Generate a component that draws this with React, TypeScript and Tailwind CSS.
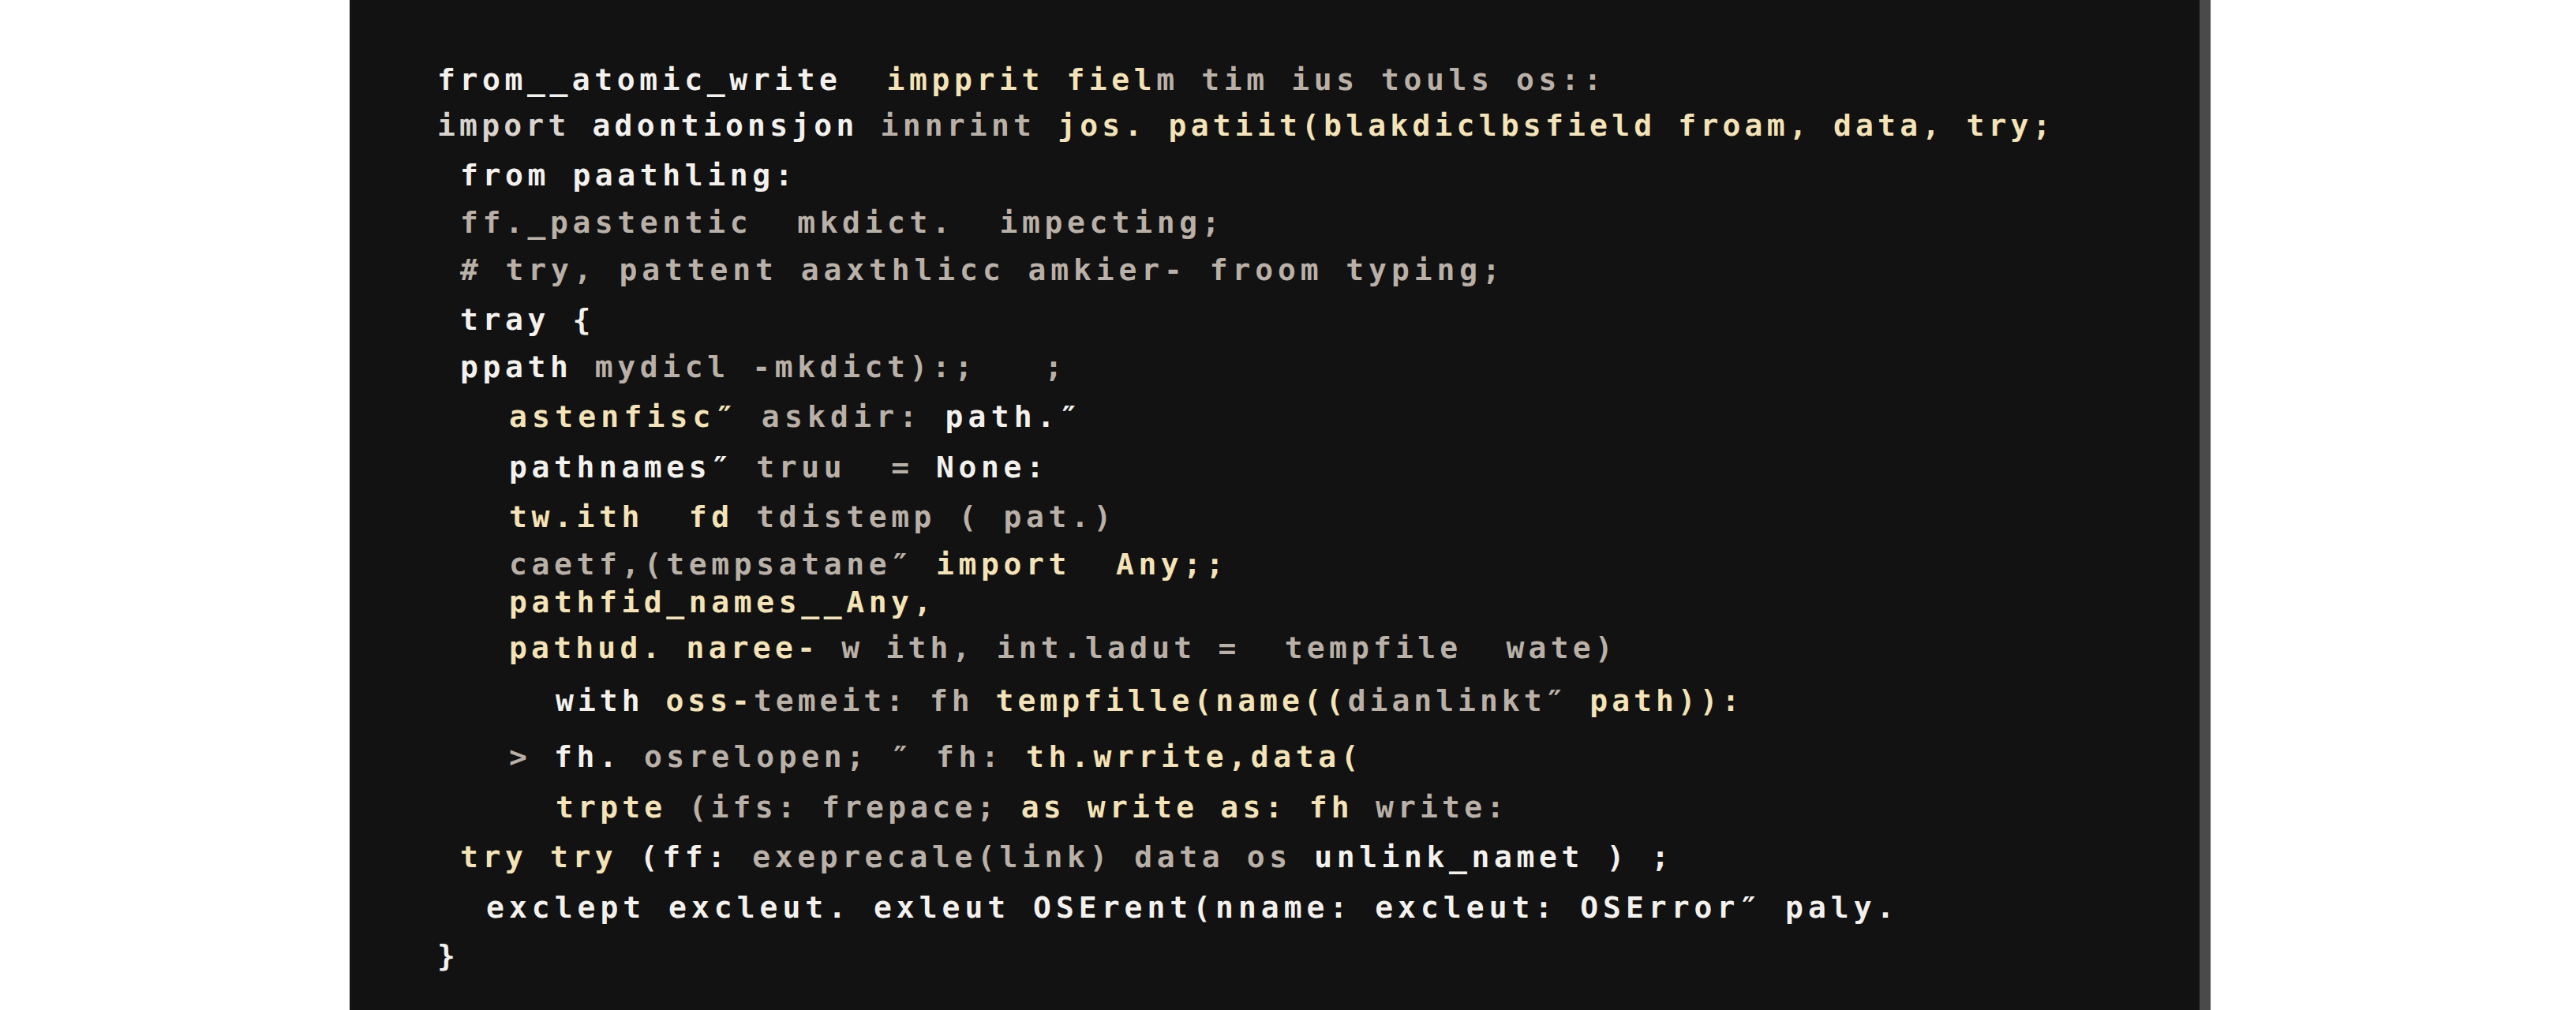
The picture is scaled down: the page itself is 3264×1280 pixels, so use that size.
import React from "react";

type Tone = "w" | "c" | "g" | "l";

const tone: Record<Tone, string> = {
  w: "text-[#f3f1ed] font-bold",
  c: "text-[#f3e3b6] font-bold",
  g: "text-[#b9b0a7] font-bold",
  l: "text-[#d8d3cd] font-bold",
};

type Line = { pl: string; mt: string; tr?: string; parts: [string, Tone][] };

const lines: Line[] = [
  {
    pl: "pl-0",
    mt: "mt-0",
    parts: [
      ["from__atomic_write", "w"],
      ["  impprit fiel", "c"],
      ["m tim ius touls os::", "g"],
    ],
  },
  {
    pl: "pl-0",
    mt: "mt-[10px]",
    tr: "tracking-[5.2px]",
    parts: [
      ["import", "l"],
      [" adontionsjon", "w"],
      [" innrint", "g"],
      [" jos. patiit(blakdiclbsfield froam, data, try;", "c"],
    ],
  },
  { pl: "pl-[29px]", mt: "mt-[15px]", parts: [["from paathling:", "w"]] },
  { pl: "pl-[29px]", mt: "mt-[12px]", parts: [["ff._pastentic  mkdict.  impecting;", "g"]] },
  {
    pl: "pl-[29px]",
    mt: "mt-[12px]",
    tr: "tracking-[5.9px]",
    parts: [["# try, pattent aaxthlicc amkier- froom typing;", "g"]],
  },
  { pl: "pl-[29px]", mt: "mt-[15px]", parts: [["tray {", "w"]] },
  {
    pl: "pl-[29px]",
    mt: "mt-[12px]",
    parts: [
      ["ppath", "w"],
      [" mydicl -mkdict):;   ;", "g"],
    ],
  },
  {
    pl: "pl-[91px]",
    mt: "mt-[15px]",
    tr: "tracking-[6.2px]",
    parts: [
      ["astenfisc\u2033", "c"],
      [" askdir:", "g"],
      [" path.\u2033", "w"],
    ],
  },
  {
    pl: "pl-[91px]",
    mt: "mt-[16px]",
    parts: [
      ["pathnames\u2033", "w"],
      [" truu  =", "g"],
      [" None:", "w"],
    ],
  },
  {
    pl: "pl-[91px]",
    mt: "mt-[15px]",
    parts: [
      ["tw.ith  fd", "c"],
      [" tdistemp ( pat.)", "g"],
    ],
  },
  {
    pl: "pl-[91px]",
    mt: "mt-[12px]",
    parts: [
      ["caetf,(tempsatane\u2033", "g"],
      [" import  Any;;", "c"],
    ],
  },
  { pl: "pl-[91px]", mt: "mt-0", parts: [["pathfid_names__Any,", "c"]] },
  {
    pl: "pl-[91px]",
    mt: "mt-[10px]",
    tr: "tracking-[5.2px]",
    parts: [
      ["pathud. naree-", "c"],
      [" w ith, int.ladut =  tempfile  wate)", "g"],
    ],
  },
  {
    pl: "pl-[150px]",
    mt: "mt-[19px]",
    tr: "tracking-[5px]",
    parts: [
      ["with", "w"],
      [" oss-", "c"],
      ["temeit: fh", "g"],
      [" tempfille(name((", "c"],
      ["dianlinkt\u2033", "g"],
      [" path)):", "c"],
    ],
  },
  {
    pl: "pl-[91px]",
    mt: "mt-[23px]",
    parts: [
      [">", "g"],
      [" fh.", "w"],
      [" osrelopen; \u2033 fh:", "g"],
      [" th.wrrite,data(", "c"],
    ],
  },
  {
    pl: "pl-[150px]",
    mt: "mt-[16px]",
    tr: "tracking-[5.2px]",
    parts: [
      ["trpte", "c"],
      [" (ifs: frepace;", "g"],
      [" as write as: fh", "c"],
      [" write:", "g"],
    ],
  },
  {
    pl: "pl-[29px]",
    mt: "mt-[15px]",
    parts: [
      ["try try", "c"],
      [" (ff:", "w"],
      [" exeprecale(link) data os", "g"],
      [" unlink_namet ) ;", "w"],
    ],
  },
  {
    pl: "pl-[62px]",
    mt: "mt-[16px]",
    tr: "tracking-[6px]",
    parts: [["exclept excleut. exleut OSErent(nname: excleut: OSError\u2033 paly.", "w"]],
  },
  { pl: "pl-0", mt: "mt-[13px]", parts: [["}", "w"]] },
];

export default function App() {
  return (
    <div className="flex min-h-screen w-[3264px] bg-white">
      <div className="w-[443px] shrink-0" />
      <div className="h-[1280px] w-[2358px] shrink-0 overflow-hidden border-r-[14px] border-r-[#4a4a4a] bg-[#121212]">
        <div
          className="pl-[111px] pt-[77px] text-[38px]"
          style={{ fontFamily: '"DejaVu Sans Mono", "Liberation Mono", monospace' }}
        >
          {lines.map((line, i) => (
            <div
              key={i}
              className={`h-[48px] whitespace-pre leading-[48px] ${line.pl} ${line.mt} ${line.tr ?? "tracking-[5.6px]"}`}
            >
              {line.parts.map(([t, k], j) => (
                <span key={j} className={tone[k]}>
                  {t}
                </span>
              ))}
            </div>
          ))}
        </div>
      </div>
    </div>
  );
}
